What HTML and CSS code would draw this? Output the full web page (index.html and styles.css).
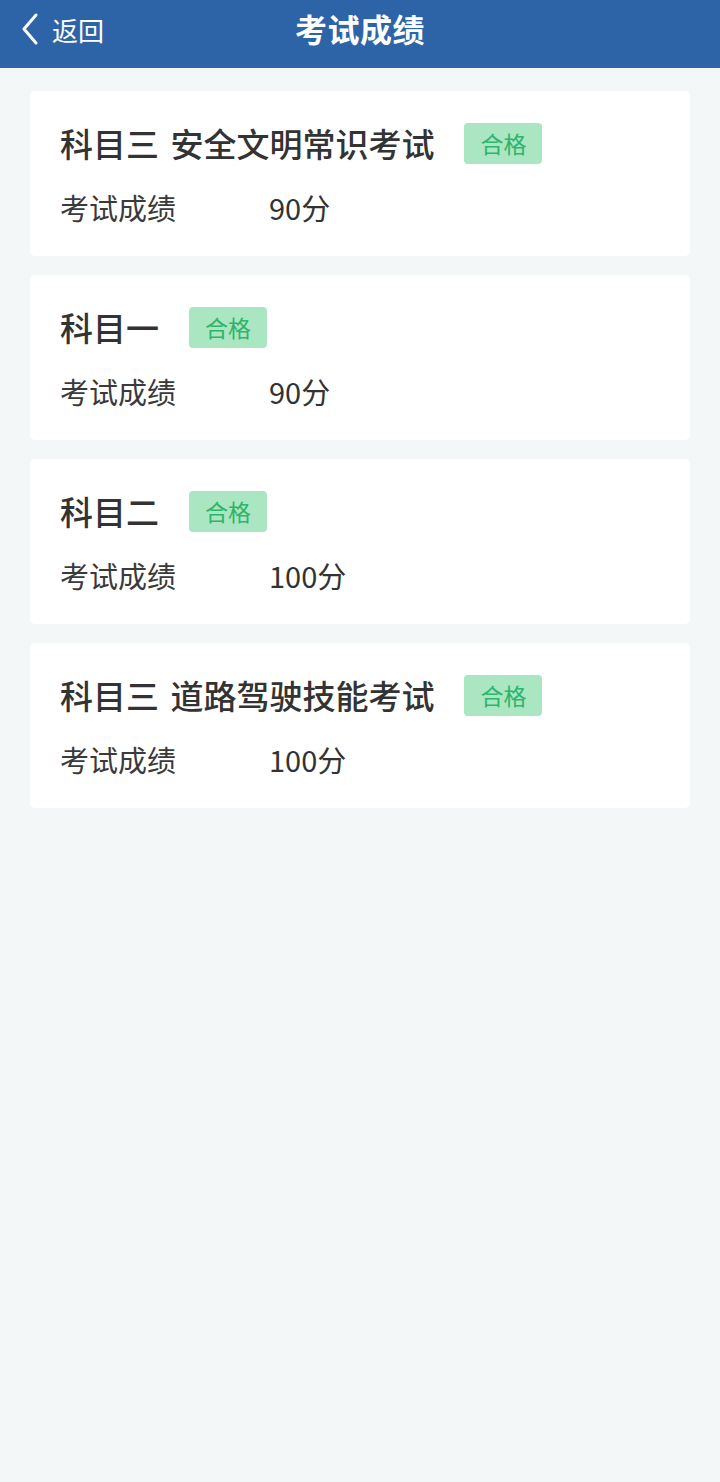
FILE: index.html
```html
<!DOCTYPE html>
<html lang="zh">
<head>
<meta charset="utf-8">
<title>考试成绩</title>
<link rel="stylesheet" href="styles.css">
</head>
<body>
<header class="topbar">
  <div class="back">
    <svg class="chev" width="20" height="32" viewBox="0 0 20 32"><path d="M16 2 L4 16 L16 30" fill="none" stroke="#fff" stroke-width="3" stroke-linecap="round" stroke-linejoin="round"/></svg>
    <span>返回</span>
  </div>
  <h1 class="title">考试成绩</h1>
</header>
<main class="list">
  <section class="card">
    <div class="head"><span class="name">科目三 安全文明常识考试</span><span class="badge">合格</span></div>
    <div class="row"><span class="label">考试成绩</span><span class="value">90分</span></div>
  </section>
  <section class="card">
    <div class="head"><span class="name">科目一</span><span class="badge">合格</span></div>
    <div class="row"><span class="label">考试成绩</span><span class="value">90分</span></div>
  </section>
  <section class="card">
    <div class="head"><span class="name">科目二</span><span class="badge">合格</span></div>
    <div class="row"><span class="label">考试成绩</span><span class="value">100分</span></div>
  </section>
  <section class="card">
    <div class="head"><span class="name">科目三 道路驾驶技能考试</span><span class="badge">合格</span></div>
    <div class="row"><span class="label">考试成绩</span><span class="value">100分</span></div>
  </section>
</main>
</body>
</html>
```
FILE: styles.css
```css
* { box-sizing: border-box; }
html, body { margin: 0; padding: 0; }
body {
  background: #f3f7f8;
  font-family: "Noto Sans CJK SC", "Noto Sans", sans-serif;
  min-height: 1482px;
}
.topbar {
  height: 68px;
  background: #2d64a8;
  position: relative;
  display: flex;
  align-items: center;
  justify-content: center;
}
.back {
  position: absolute;
  left: 20px;
  top: 0;
  height: 58px;
  display: flex;
  align-items: center;
  color: #fff;
  font-size: 26px;
}
.chev { margin-right: 12px; margin-top: 0; }
.title {
  margin: 0;
  margin-top: -12px;
  color: #fff;
  font-size: 32px;
  font-weight: 700;
  letter-spacing: 0.5px;
}
.list {
  padding: 23px 30px;
  display: flex;
  flex-direction: column;
  gap: 19px;
}
.card {
  background: #fff;
  border-radius: 5px;
  height: 165px;
  padding: 30px 30px 0 30px;
}
.head {
  display: flex;
  align-items: center;
  height: 44px;
}
.name {
  font-size: 33px;
  font-weight: 500;
  color: #333;
  white-space: pre;
  word-spacing: 4px;
}
.badge {
  margin-left: 30px;
  width: 78px;
  height: 41px;
  border-radius: 4px;
  background: #a9e6c1;
  color: #2fb46b;
  font-size: 23px;
  display: flex;
  align-items: center;
  justify-content: center;
}
.row {
  display: flex;
  align-items: center;
  margin-top: 22px;
  height: 40px;
  color: #3a3a3a;
  font-size: 29px;
}
.label { width: 209px; }
.value { color: #333; }
```
